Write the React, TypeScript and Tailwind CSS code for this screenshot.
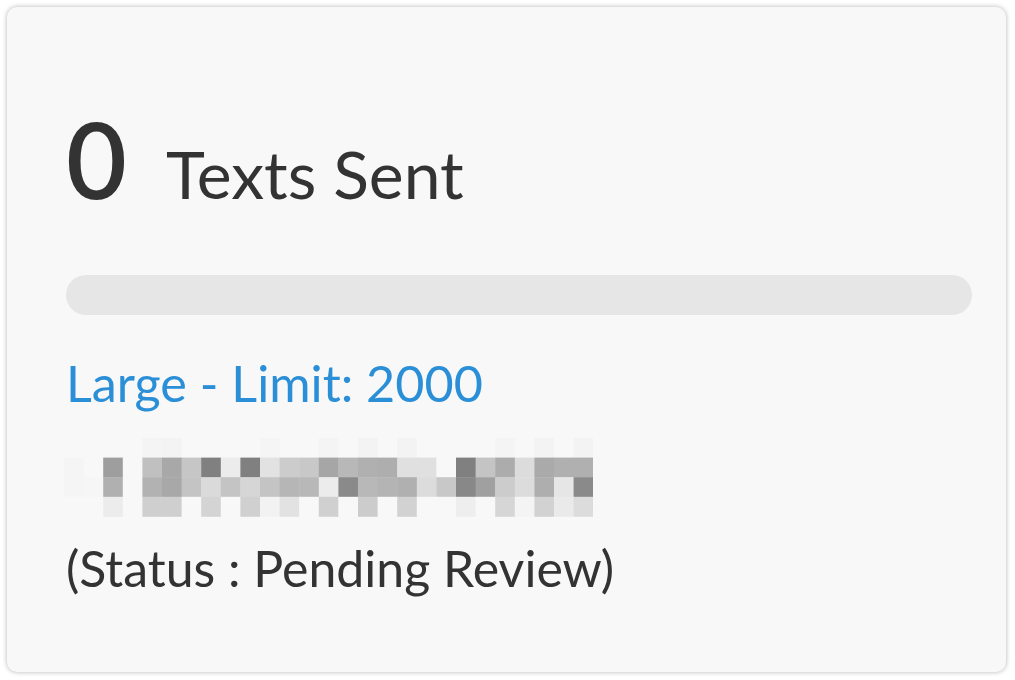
import React from "react"

// pixelated (redacted) phone number, 27 x 4 cells, grey values
const redacted = [
  "f8 f8 f8 f8 f4 f3 f8 f8 f8 f8 f5 f8 f8 f4 f8 f3 f8 f3 f8 f8 f8 f8 f4 f8 f3 f8 f3",
  "f5 f8 9e f8 c0 a8 c6 80 ec 80 e2 cc c8 a6 b8 b0 ae e0 e0 f8 80 c4 ac dc aa b0 b0",
  "f5 f6 b0 f8 b2 a8 c4 da c4 d6 c4 b6 b8 ec 8a b8 b4 b0 dc c8 88 a0 cc dc ae e6 8a",
  "f8 f8 ec f8 cf cf f8 d4 f8 d0 f2 e2 f8 d0 f8 cc f8 d2 f8 f8 ee f8 d6 f4 d2 ea dc",
].map((row) => row.split(" "))

const CELL = 19.6

function Redacted() {
  return (
    <svg width={27 * CELL} height={4 * CELL} className="block">
      {redacted.map((row, y) =>
        row.map((v, x) => (
          <rect
            key={`${x}-${y}`}
            x={x * CELL}
            y={y * CELL}
            width={CELL + 0.4}
            height={CELL + 0.4}
            fill={`#${v}${v}${v}`}
          />
        ))
      )}
    </svg>
  )
}

export default function App() {
  return (
    <div className="min-h-screen bg-white p-[7px]" style={{ fontFamily: "Lato, 'Open Sans', sans-serif" }}>
      <div className="w-[999px] h-[665px] rounded-[10px] bg-[#f8f8f8] shadow-[0_0_5px_rgba(0,0,0,0.3)] pl-[59px] pr-[34px] pt-[99px]">
        {/* Count */}
        <div className="flex items-baseline text-[#333333] leading-none">
          <span className="text-[105px] font-semibold">0</span>
          <span className="text-[66px] ml-[39px]">Texts Sent</span>
        </div>

        {/* Progress */}
        <div className="mt-[64px] h-[40px] rounded-full bg-[#e6e6e6]" />

        {/* Plan */}
        <div className="mt-[43px] text-[50.3px] leading-none text-[#2b8fd8]">Large - Limit: 2000</div>

        <div className="mt-[30px] ml-[-2px]">
          <Redacted />
        </div>

        <div className="mt-[26px] text-[50px] leading-none text-[#333333]">(Status : Pending Review)</div>
      </div>
    </div>
  )
}
